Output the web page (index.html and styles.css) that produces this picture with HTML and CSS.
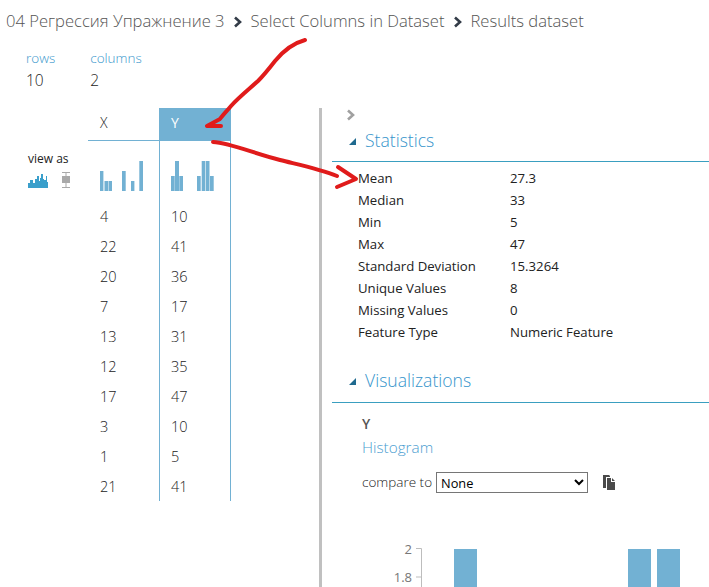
FILE: index.html
```html
<!DOCTYPE html>
<html lang="ru">
    <head>
        <title>Results dataset</title>
        <meta charset="UTF-8">
        <link rel="stylesheet" href="styles.css">
    </head>
    <body>
        <div class="crumbs">
            <span>04 Регрессия Упражнение 3</span>
            <svg class="crumb-sep" width="10" height="12" viewBox="0 0 10 12"><path d="M2 1.5 L7 6 L2 10.5" fill="none" stroke="#333c48" stroke-width="2.6"/></svg>
            <span>Select Columns in Dataset</span>
            <svg class="crumb-sep" width="10" height="12" viewBox="0 0 10 12"><path d="M2 1.5 L7 6 L2 10.5" fill="none" stroke="#333c48" stroke-width="2.6"/></svg>
            <span>Results dataset</span>
        </div>

        <div class="counts">
            <div class="count">
                <div class="count-label">rows</div>
                <div class="count-value">10</div>
            </div>
            <div class="count">
                <div class="count-label">columns</div>
                <div class="count-value">2</div>
            </div>
        </div>

        <div class="main">
            <div class="left">
                <div class="view-as">
                    <div class="view-label">view as</div>
                    <div class="view-icons">
                        <svg width="21" height="15" viewBox="0 0 21 15"><path d="M0 15 V10 H2 V7 H5 V10 H7 V6 H9 V3 H11 V8 H12 V5 H13 V1 H15 V6 H16 V7 H18 V3 H19 V9 H20 V15 Z" fill="#3a9fcb"/></svg>
                        <svg width="8" height="16" viewBox="0 0 8 16"><path d="M0 .5 H8 M4 0 V16 M0 15.5 H8" stroke="#a9a9a9" fill="none"/><rect y="4" width="8" height="7" fill="#a9a9a9"/></svg>
                    </div>
                </div>
                <div class="grid">
                    <div class="col">
                        <div class="col-head">X</div>
                        <svg class="mini" width="71" height="61" viewBox="0 0 71 61">
                            <g fill="#72b1d3">
                                <rect x="12" y="30" width="3.400" height="20"/><rect x="16.500" y="40" width="3.500" height="10"/><rect x="20.500" y="40" width="3.500" height="10"/>
                                <rect x="34" y="30" width="3.700" height="20"/><rect x="43" y="40" width="3.400" height="10"/><rect x="51.300" y="20" width="3.700" height="30"/>
                            </g>
                        </svg>
                        <div class="cell">4</div><div class="cell">22</div><div class="cell">20</div><div class="cell">7</div><div class="cell">13</div>
                        <div class="cell">12</div><div class="cell">17</div><div class="cell">3</div><div class="cell">1</div><div class="cell">21</div>
                    </div>
                    <div class="col col-active">
                        <div class="col-head">Y</div>
                        <svg class="mini" width="70" height="61" viewBox="0 0 70 61">
                            <g fill="#72b1d3">
                                <rect x="11" y="35" width="3.700" height="15"/><rect x="15" y="20" width="4" height="30"/><rect x="19.300" y="35" width="3.700" height="15"/>
                                <rect x="37" y="35" width="3.700" height="15"/><rect x="41.700" y="20" width="3.700" height="30"/><rect x="46" y="20" width="3.500" height="30"/><rect x="50" y="35" width="3.700" height="15"/>
                            </g>
                        </svg>
                        <div class="cell">10</div><div class="cell">41</div><div class="cell">36</div><div class="cell">17</div><div class="cell">31</div>
                        <div class="cell">35</div><div class="cell">47</div><div class="cell">10</div><div class="cell">5</div><div class="cell">41</div>
                    </div>
                </div>
            </div>

            <div class="right">
                <svg class="expand" width="10" height="12" viewBox="0 0 10 12"><path d="M2 1.500 L7 6 L2 10.500" fill="none" stroke="#a0a0a0" stroke-width="2.600"/></svg>

                <div class="section-head">
                    <span class="tri"></span>
                    <span class="section-title">Statistics</span>
                </div>
                <div class="stats">
                    <div class="stat-name">Mean</div><div>27.3</div>
                    <div class="stat-name">Median</div><div>33</div>
                    <div class="stat-name">Min</div><div>5</div>
                    <div class="stat-name">Max</div><div>47</div>
                    <div class="stat-name">Standard Deviation</div><div>15.3264</div>
                    <div class="stat-name">Unique Values</div><div>8</div>
                    <div class="stat-name">Missing Values</div><div>0</div>
                    <div class="stat-name">Feature Type</div><div>Numeric Feature</div>
                </div>

                <div class="section-head section-vis">
                    <span class="tri"></span>
                    <span class="section-title">Visualizations</span>
                </div>
                <div class="vis">
                    <div class="vis-col">Y</div>
                    <div class="vis-kind">Histogram</div>
                    <div class="compare">
                        <label class="compare-label" for="cmp">compare to</label>
                        <select id="cmp" class="compare-select"><option>None</option></select>
                        <svg width="12" height="15" viewBox="0 0 12 15"><path d="M0 0 H6 L7 1 V2 H3 V13 H0 Z M4 3 H8 V7 H12 V15 H4 Z M9 3 L12 6 H9 Z" fill="#4a4a4a"/></svg>
                    </div>
                    <svg class="chart" width="377" height="46" viewBox="0 0 377 46">
                        <path d="M84 7.500 H89.500 V46 M84 36 H89.500" fill="none" stroke="#bdbdbd"/>
                        <text x="80" y="12.500" text-anchor="end">2</text>
                        <text x="80" y="40.500" text-anchor="end">1.8</text>
                        <rect x="122" y="8" width="23" height="38" fill="#72b1d3"/>
                        <rect x="296" y="8" width="23" height="38" fill="#72b1d3"/>
                        <rect x="325" y="8" width="23" height="38" fill="#72b1d3"/>
                    </svg>
                </div>
            </div>
        </div>

        <!-- hand drawn red annotations on top of the screenshot -->
        <svg class="marks" width="709" height="587" viewBox="0 0 709 587">
            <g fill="none" stroke="#e01b1b" stroke-width="4" stroke-linecap="round" stroke-linejoin="round">
                <path d="M305 40 C294 43 284 50 275 61 C268 70 264 75 258 81 C248 90 238 98 231 106 C226 112 222 116 220 119 L207 126 L221 126"/>
                <path d="M213 142 C230 143 250 152 280 160 C300 165 320 169 337 176"/>
                <path d="M338 167 L356 179 L337 187"/>
            </g>
        </svg>
    </body>
</html>
```

FILE: styles.css
```css
body{
    margin: 0;
    height: 587px;
    overflow: hidden;
    position: relative;
    background: #fff;
    color: #222;
    font-family: "Open Sans", "Noto Sans", sans-serif;
    font-weight: 300;
}
.crumbs{
    display: flex;
    align-items: center;
    gap: 8px;
    height: 24px;
    padding: 9px 0 0 6px;
    font-size: 16.6px;
    line-height: 24px;
    color: #555;
}
.crumb-sep{
    margin: 2px 0 0;
}
.counts{
    display: flex;
    gap: 35px;
    height: 58px;
    padding: 17px 0 0 26px;
}
.count-label{
    font-size: 13.5px;
    line-height: 17px;
    color: #3a97cc;
}
.count-value{
    font-size: 15.5px;
    line-height: 26px;
}
.main{
    display: flex;
    height: 479px;
}
.left{
    display: flex;
    width: 319px;
    height: 393px;
}
.view-as{
    width: 88px;
    padding: 43px 0 0 28px;
    box-sizing: border-box;
}
.view-label{
    font-size: 12px;
    line-height: 16px;
    font-weight: 400;
}
.view-icons{
    display: flex;
    align-items: flex-end;
    gap: 13px;
    margin-top: 5px;
}
.grid{
    display: flex;
}
.col{
    width: 71px;
}
.col-head{
    height: 32px;
    line-height: 30px;
    padding-left: 12px;
    font-size: 14px;
    border-bottom: 1px solid #72b1d3;
}
.mini{
    display: block;
}
.cell{
    height: 30px;
    line-height: 30px;
    padding-left: 12px;
    font-size: 14.5px;
}
.col-active{
    width: 72px;
    box-sizing: border-box;
    border-left: 1px solid #72b1d3;
    border-right: 1px solid #72b1d3;
}
.col-active .col-head{
    margin: 0 -1px;
    background: #72b1d3;
    color: #fff;
    font-weight: 400;
    border-bottom: none;
    height: 33px;
}
.col-active .cell{
    padding-left: 11px;
}
.right{
    flex: 1;
    padding-left: 10px;
    border-left: 3px solid #c0c0c0;
}
.expand{
    display: block;
    margin: 1px 0 0 14px;
}
.section-head{
    display: flex;
    align-items: center;
    gap: 9px;
    height: 32px;
    padding: 0 0 5px 17px;
    border-bottom: 1px solid #3a9fc0;
    margin-top: 3px;
}
.tri{
    width: 0;
    height: 0;
    margin-top: 3px;
    border-style: solid;
    border-width: 0 0 7px 7px;
    border-color: transparent transparent #1f6a8f transparent;
}
.section-title{
    font-size: 17.6px;
    color: #3594cb;
}
.section-vis{
    margin-top: 21px;
    height: 31px;
    padding-bottom: 7px;
}
.stats{
    display: grid;
    grid-template-columns: 152px 1fr;
    grid-auto-rows: 22px;
    padding: 5px 0 0 26px;
    font-size: 13.2px;
    line-height: 22px;
    font-weight: 500;
}
.vis{
    padding: 10px 0 0 30px;
}
.vis-col{
    font-size: 14px;
    font-weight: 600;
    line-height: 22px;
    color: #555;
}
.vis-kind{
    font-size: 15.3px;
    line-height: 24px;
    color: #4a9dd0;
}
.compare{
    display: flex;
    align-items: center;
    height: 22px;
    margin-top: 12px;
}
.compare-label{
    width: 74px;
    font-size: 13.5px;
}
.compare-select{
    width: 152px;
    height: 21px;
    margin-right: 15px;
    padding-bottom: 2px;
    font-family: "Open Sans", sans-serif;
    font-size: 12.8px;
    background: #fff;
}
.chart{
    display: block;
    margin: 48px 0 0 -30px;
    font-size: 13px;
    font-weight: 400;
    fill: #777;
}
.marks{
    position: absolute;
    left: 0;
    top: 0;
    pointer-events: none;
}
```
